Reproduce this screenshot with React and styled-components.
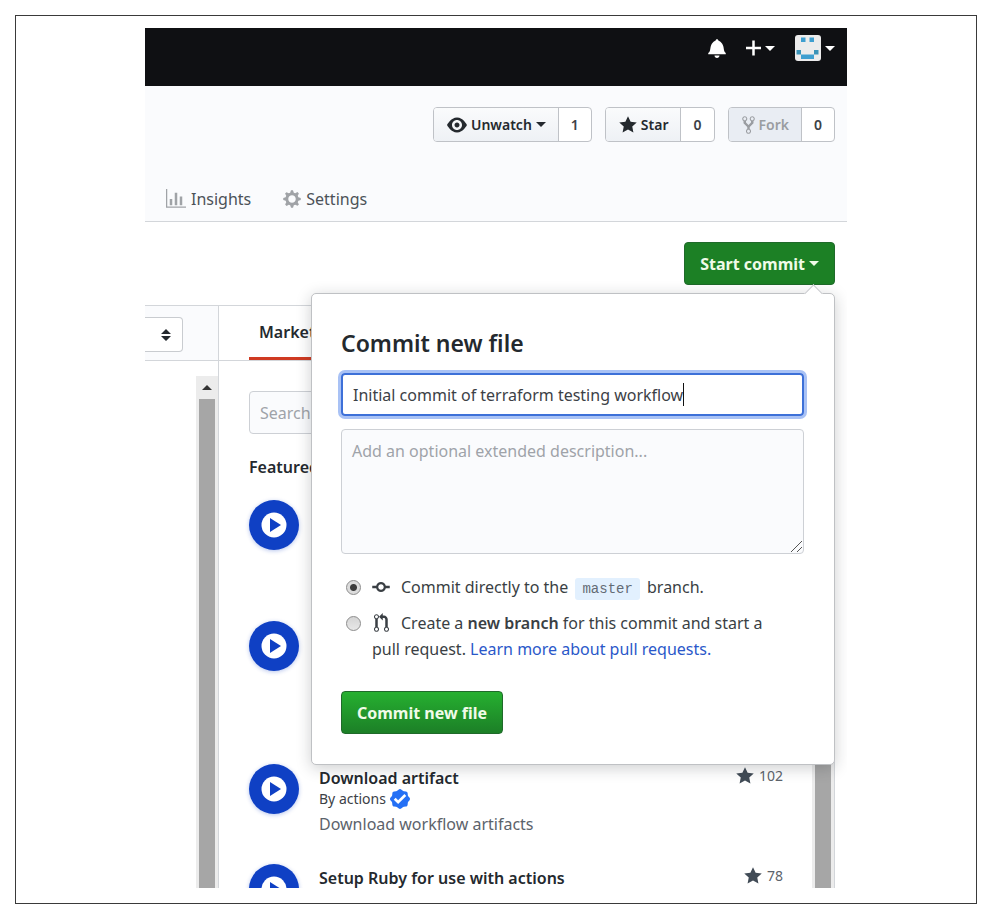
import React from "react";
import styled, { createGlobalStyle } from "styled-components";

const GlobalStyle = createGlobalStyle`
  *, *::before, *::after { box-sizing: border-box; }
  body {
    margin: 0;
    background: #fff;
    color: #24292e;
    font: 16px/26px "Noto Sans", "Open Sans", sans-serif;
  }
  button, input, textarea { font: inherit; color: inherit; }
  h2, h3, p { margin: 0; }
  svg { display: block; flex: none; }
`;

/* ---------- icons ---------- */

const ICONS = {
  eye: [16, "M8.06 2C3 2 0 8 0 8s3 6 8.06 6C13 14 16 8 16 8s-3-6-7.94-6zM8 12c-2.2 0-4-1.78-4-4 0-2.2 1.8-4 4-4 2.22 0 4 1.8 4 4 0 2.22-1.78 4-4 4zm2-4c0 1.11-.89 2-2 2-1.11 0-2-.89-2-2 0-1.11.89-2 2-2 1.11 0 2 .89 2 2z"],
  star: [14, "M14 6l-4.9-.64L7 1 4.9 5.36 0 6l3.6 3.26L2.67 14 7 11.67 11.33 14l-.93-4.74L14 6z"],
  fork: [10, "M8 1a1.993 1.993 0 0 0-1 3.72V6L5 8 3 6V4.72A1.993 1.993 0 0 0 2 1a1.993 1.993 0 0 0-1 3.72V6.5l3 3v1.78A1.993 1.993 0 0 0 5 15a1.993 1.993 0 0 0 1-3.72V9.5l3-3V4.72A1.993 1.993 0 0 0 8 1zM2 4.2C1.34 4.2.8 3.65.8 3c0-.65.55-1.2 1.2-1.2.65 0 1.2.55 1.2 1.2 0 .65-.55 1.2-1.2 1.2zm3 10c-.66 0-1.2-.55-1.2-1.2 0-.65.55-1.2 1.2-1.2.65 0 1.2.55 1.2 1.2 0 .65-.55 1.2-1.2 1.2zm3-10c-.66 0-1.2-.55-1.2-1.2 0-.65.55-1.2 1.2-1.2.65 0 1.2.55 1.2 1.2 0 .65-.55 1.2-1.2 1.2z"],
  graph: [16, "M16 14v1H0V0h1v14h15zM5 13H3V8h2v5zm4 0H7V3h2v10zm4 0h-2V6h2v7z"],
  gear: [14, "M14 8.77v-1.6l-1.94-.64-.45-1.09.88-1.84-1.13-1.13-1.81.91-1.09-.45-.69-1.92h-1.6l-.63 1.94-1.11.45-1.84-.88-1.13 1.13.91 1.81-.45 1.09L0 7.23v1.59l1.94.64.45 1.09-.88 1.84 1.13 1.13 1.81-.91 1.09.45.69 1.92h1.59l.63-1.94 1.11-.45 1.84.88 1.13-1.13-.92-1.81.47-1.09L14 8.75v.02zM7 11c-1.66 0-3-1.34-3-3s1.34-3 3-3 3 1.34 3 3-1.34 3-3 3z"],
  bell: [14, "M14 12v1H0v-1l.73-.58c.77-.77.81-2.55 1.19-4.42C2.69 3.23 6 2 6 2c0-.55.45-1 1-1s1 .45 1 1c0 0 3.39 1.23 4.16 5 .38 1.88.42 3.66 1.19 4.42l.66.58H14zm-7 4c1.11 0 2-.89 2-2H5c0 1.11.89 2 2 2z"],
  plus: [12, "M12 9H7v5H5V9H0V7h5V2h2v5h5v2z"],
  commit: [14, "M10.86 7c-.45-1.72-2-3-3.86-3-1.86 0-3.41 1.28-3.86 3H0v2h3.14c.45 1.72 2 3 3.86 3 1.86 0 3.41-1.28 3.86-3H14V7h-3.14zM7 10.2c-1.22 0-2.2-.98-2.2-2.2 0-1.22.98-2.2 2.2-2.2 1.22 0 2.2.98 2.2 2.2 0 1.22-.98 2.2-2.2 2.2z"],
  pull: [12, "M11 11.28V5c-.03-.78-.34-1.47-.94-2.06C9.46 2.35 8.78 2.03 8 2H7V0L4 3l3 3V4h1c.27.02.48.11.69.31.21.2.3.42.31.69v6.28A1.993 1.993 0 0 0 10 15a1.993 1.993 0 0 0 1-3.72zm-1 2.92c-.66 0-1.2-.55-1.2-1.2 0-.65.55-1.2 1.2-1.2.65 0 1.2.55 1.2 1.2 0 .65-.55 1.2-1.2 1.2zM4 3c0-1.11-.89-2-2-2a1.993 1.993 0 0 0-1 3.72v6.56A1.993 1.993 0 0 0 2 15a1.993 1.993 0 0 0 1-3.72V4.72c.59-.34 1-.98 1-1.72zm-.8 10c0 .66-.55 1.2-1.2 1.2-.65 0-1.2-.55-1.2-1.2 0-.65.55-1.2 1.2-1.2.65 0 1.2.55 1.2 1.2zM2 4.2C1.34 4.2.8 3.65.8 3c0-.65.55-1.2 1.2-1.2.65 0 1.2.55 1.2 1.2 0 .65-.55 1.2-1.2 1.2z"],
  verified: [16, "M15.67 7.06l-1.08-1.34c-.17-.22-.28-.48-.31-.77l-.19-1.7a1.51 1.51 0 0 0-1.33-1.33l-1.7-.19c-.3-.03-.56-.16-.78-.33L8.94.32c-.55-.44-1.33-.44-1.88 0L5.72 1.4c-.22.17-.48.28-.77.31l-1.7.19c-.7.08-1.25.63-1.33 1.33l-.19 1.7c-.03.3-.16.56-.33.78L.32 7.05c-.44.55-.44 1.33 0 1.88l1.08 1.34c.17.22.28.48.31.77l.19 1.7c.08.7.63 1.25 1.33 1.33l1.7.19c.3.03.56.16.78.33l1.34 1.08c.55.44 1.33.44 1.88 0l1.34-1.08c.22-.17.48-.28.77-.31l1.7-.19c.7-.08 1.25-.63 1.33-1.33l.19-1.7c.03-.3.16-.56.33-.78l1.08-1.34c.44-.55.44-1.33 0-1.88zM6.5 12L3 8.5 4.5 7l2 2 5-5L13 5.55 6.5 12z"],
};

function Icon({ name, size = 20, color = "currentColor" }) {
  const [width, d] = ICONS[name];
  return (
    <svg height={size} width={Math.round((size * width) / 16)} viewBox={`0 0 ${width} 16`} fill={color} aria-hidden="true">
      <path fillRule="evenodd" d={d} />
    </svg>
  );
}

function Avatar() {
  return (
    <svg width="26" height="26" viewBox="0 0 26 26" role="img" aria-label="Account">
      <rect width="26" height="26" rx="3" fill="#ececec" />
      <path fill="#3f9fd0" d="M6 2.500h4.500V7H6zM14.500 2.500H19V7h-4.500zM6 19.500h13V24H6z" />
      <path fill="#3a93b8" d="M1.500 15H6v4.500H1.500zM19 15h4.500v4.500H19z" />
    </svg>
  );
}

function PlayGlyph() {
  return (
    <svg width="26" height="26" viewBox="0 0 26 26" aria-hidden="true">
      <circle cx="13" cy="13" r="12.500" fill="#fff" />
      <path d="M9 6v14l11-7z" fill="#0f40c4" />
    </svg>
  );
}

function Grip() {
  return (
    <svg width="11" height="11" viewBox="0 0 11 11" fill="none" stroke="#555" aria-hidden="true">
      <path d="M0 11L11 0M6 11l5-5" />
    </svg>
  );
}

function SortGlyph() {
  return (
    <svg width="10" height="14" viewBox="0 0 10 14" fill="#24292e" aria-hidden="true">
      <path d="M0 6l5-5 5 5zM0 8h10l-5 5z" />
    </svg>
  );
}

/* ---------- page shell ---------- */

const Page = styled.div`
  height: 100vh;
  padding: 15px 8px 9px 15px;
`;

const Frame = styled.div`
  height: 100%;
  border: 1px solid #3a3a3a;
  padding: 12px 129px 15px;
`;

const Shot = styled.div`
  height: 100%;
  display: flex;
  flex-direction: column;
  overflow: hidden;
`;

const TopBar = styled.header`
  flex: none;
  height: 58px;
  padding: 6px 12px 0;
  display: flex;
  align-items: flex-start;
  justify-content: flex-end;
  gap: 20px;
  background: #0f1013;
  color: #fff;
`;

const BarButton = styled.button`
  display: flex;
  align-items: center;
  gap: 4px;
  height: 28px;
  padding: 0;
  border: 0;
  background: none;
`;

const Triangle = styled.span`
  border: solid transparent;
  border-width: 5px 5px 0;
  border-top-color: currentColor;
`;

const RepoHead = styled.section`
  flex: none;
  display: flex;
  flex-direction: column;
  justify-content: space-between;
  height: 136px;
  padding: 21px 12px 9px 21px;
  background: #fafbfd;
  border-bottom: 1px solid #d3d6da;
`;

const Actions = styled.div`
  display: flex;
  justify-content: flex-end;
  gap: 13px;
`;

const Social = styled.div`
  display: flex;
  height: 35px;
  border: 1px solid #bfc2c7;
  border-radius: 4px;
  overflow: hidden;
  background: #fff;
  font-size: 14px;
  font-weight: 600;
`;

const SocialButton = styled.button`
  display: flex;
  align-items: center;
  gap: 4px;
  padding: 0 12px 0 13px;
  border: 0;
  border-right: 1px solid #bfc2c7;
  background: linear-gradient(#fafbfc, #eef1f5);
  &:disabled {
    background: #e9edf3;
    color: #9a9da1;
  }
`;

const Count = styled.a`
  display: flex;
  align-items: center;
  padding: 0 12px;
  color: #3c4146;
  text-decoration: none;
`;

const Tabs = styled.nav`
  display: flex;
  gap: 32px;
`;

const TabLink = styled.a`
  display: flex;
  align-items: center;
  gap: 5px;
  color: #4c5258;
  text-decoration: none;
  svg { color: #a0a3a7; }
`;

const CommitBar = styled.div`
  flex: none;
  display: flex;
  justify-content: flex-end;
  padding: 20px 12px;
`;

const PopoverAnchor = styled.div`
  position: relative;
`;

const GreenButton = styled.button`
  display: flex;
  align-items: center;
  gap: 4px;
  height: 43px;
  padding: 0 15px;
  border: 1px solid #1f6a2a;
  border-radius: 4px;
  background: ${(p) => (p.$pressed ? "#1c8025" : "linear-gradient(#26b030, #1c7f27)")};
  color: #f0fbe8;
  font-weight: 700;
`;

/* ---------- commit popover ---------- */

const Popover = styled.form`
  position: absolute;
  z-index: 2;
  top: calc(100% + 8px);
  right: 0;
  width: 524px;
  padding: 34px 30px 30px 29px;
  display: flex;
  flex-direction: column;
  align-items: stretch;
  background: #fff;
  border: 1px solid #bfc1c4;
  border-radius: 5px;
  box-shadow: 0 3px 15px rgba(27, 31, 35, 0.22);
  &::before {
    content: "";
    position: absolute;
    top: -7px;
    right: 14px;
    width: 13px;
    height: 13px;
    background: #fff;
    border: solid #c9cbce;
    border-width: 1px 0 0 1px;
    transform: rotate(45deg);
  }
`;

const PopoverTitle = styled.h2`
  font-size: 23px;
  line-height: 30px;
  font-weight: 600;
`;

const SummaryField = styled.label`
  display: flex;
  align-items: center;
  height: 43px;
  margin-top: 15px;
  padding: 0 10px;
  border: 2px solid #3d70d8;
  border-radius: 4px;
  box-shadow: 0 0 0 3px #a9c2f5;
`;

const SummaryInput = styled.input`
  field-sizing: content;
  max-width: 100%;
  padding: 0;
  border: 0;
  outline: 0;
  background: none;
  color: #3c4146;
`;

const TextCursor = styled.span`
  width: 1px;
  height: 23px;
  background: #111;
`;

const DescriptionField = styled.div`
  position: relative;
  margin-top: 13px;
  svg {
    position: absolute;
    right: 2px;
    bottom: 2px;
  }
`;

const Description = styled.textarea`
  display: block;
  width: 100%;
  height: 125px;
  padding: 8px 10px;
  border: 1px solid #cdd0d5;
  border-radius: 4px;
  background: #fafbfd;
  resize: none;
  outline: 0;
  &::placeholder { color: #9fa3a9; opacity: 1; }
`;

const Choice = styled.div`
  display: flex;
  align-items: flex-start;
  gap: 11px;
  margin-top: ${(p) => (p.$first ? "20px" : "10px")};
  padding: 0 24px 0 5px;
  color: #3a3f44;
`;

const Radio = styled.input`
  appearance: none;
  flex: none;
  width: 15px;
  height: 15px;
  margin: 6px 0 0;
  border: 1px solid #8c8c8c;
  border-radius: 50%;
  background: ${(p) =>
    p.defaultChecked
      ? "radial-gradient(circle, #3c3c3c 0 3px, #dcdcdc 4px)"
      : "linear-gradient(#d4d4d4, #e8e8e8)"};
`;

const ChoiceText = styled.label`
  b { font-weight: 600; }
`;

const ChoiceIcon = styled.span`
  display: inline-flex;
  justify-content: center;
  width: 18px;
  margin-right: 11px;
  vertical-align: -4px;
`;

const HelpLink = styled.a`
  color: #2a58c9;
  text-decoration: none;
`;

const Branch = styled.code`
  margin: 0 3px;
  padding: 3px 7px;
  border-radius: 3px;
  background: #e2f0fe;
  color: #626b75;
  font: 14px "Liberation Mono", monospace;
`;

const SubmitRow = styled.div`
  display: flex;
  margin-top: 29px;
`;

/* ---------- editor ---------- */

const Editor = styled.main`
  flex: 1;
  min-height: 0;
  display: grid;
  grid-template-columns: 74px 1fr;
  margin-right: 12px;
  border-top: 1px solid #d3d6da;
`;

const Pane = styled.section`
  display: flex;
  flex-direction: column;
  min-height: 0;
  overflow: hidden;
  border-right: 1px solid #d3d6da;
`;

const PaneHead = styled.div`
  flex: none;
  height: 55px;
  display: flex;
  align-items: ${(p) => (p.$tabs ? "stretch" : "center")};
  padding-left: ${(p) => (p.$tabs ? "30px" : "0")};
  border-bottom: 1px solid #d3d6da;
  background: ${(p) => (p.$tabs ? "#fff" : "#fafbfd")};
`;

const ModeButton = styled.button`
  display: flex;
  align-items: center;
  justify-content: flex-end;
  width: 38px;
  height: 35px;
  padding: 0 11px;
  margin-top: 3px;
  border: 1px solid #c9ccd0;
  border-left: 0;
  border-radius: 0 4px 4px 0;
  background: #fff;
`;

const MarketTab = styled.button`
  padding: 0 10px;
  border: 0;
  border-bottom: 3px solid #cf3a22;
  background: none;
  font-weight: 600;
`;

const PaneBody = styled.div`
  flex: 1;
  min-height: 0;
  display: flex;
  justify-content: flex-end;
  padding-top: ${(p) => (p.$inset ? "15px" : "0")};
`;

const ScrollTrack = styled.div`
  flex: none;
  width: 22px;
  display: flex;
  flex-direction: column;
  align-items: stretch;
  padding: 0 3px;
  background: #ececec;
  &::after {
    content: "";
    flex: 1;
    background: #a6a6a6;
  }
`;

const ScrollUp = styled.button`
  display: flex;
  align-items: center;
  justify-content: center;
  height: 23px;
  padding: 0;
  border: 0;
  background: none;
  &::before {
    content: "";
    border: 5px solid transparent;
    border-top: 0;
    border-bottom-color: #333;
  }
`;

const Market = styled.div`
  flex: 1;
  min-width: 0;
  padding: 30px 29px 0 30px;
`;

const Search = styled.input`
  display: block;
  width: 100%;
  height: 43px;
  padding: 0 10px;
  border: 1px solid #cdd0d5;
  border-radius: 4px;
  background: #fafbfd;
  &::placeholder { color: #9fa3a9; opacity: 1; }
`;

const ListTitle = styled.h3`
  margin: 20px 0;
  font-size: 16px;
  line-height: 26px;
  font-weight: 600;
`;

const Entry = styled.article`
  display: grid;
  grid-template-columns: 50px 1fr auto;
  column-gap: 20px;
  align-items: start;
  min-height: ${(p) => p.$size}px;
`;

const Disc = styled.div`
  display: grid;
  place-items: center;
  width: 50px;
  height: 50px;
  border-radius: 50%;
  background: #0f40c4;
  box-shadow: 0 1px 4px rgba(15, 64, 196, 0.3);
`;

const EntryName = styled.h3`
  font-size: 16px;
  line-height: 28px;
  font-weight: 600;
`;

const Author = styled.p`
  display: flex;
  align-items: center;
  gap: 4px;
  height: 14px;
  font-size: 14px;
  line-height: 14px;
  color: #3c4146;
`;

const Summary = styled.p`
  margin-top: 5px;
  line-height: 26px;
  color: #5c636b;
`;

const Stars = styled.span`
  display: flex;
  align-items: center;
  gap: 5px;
  font-size: 14px;
  line-height: 24px;
  color: #5c636b;
  svg { color: #414b56; }
`;

const ENTRIES = [
  { size: 121 },
  { size: 143 },
  { size: 100, name: "Download artifact", author: "By actions", text: "Download workflow artifacts", stars: 102 },
  { size: 100, name: "Setup Ruby for use with actions", stars: 78 },
];

function MarketEntry({ entry }) {
  return (
    <Entry $size={entry.size}>
      <Disc><PlayGlyph /></Disc>
      <div>
        {entry.name && <EntryName>{entry.name}</EntryName>}
        {entry.author && <Author>{entry.author} <Icon name="verified" color="#2470f5" /></Author>}
        {entry.text && <Summary>{entry.text}</Summary>}
      </div>
      {entry.stars && <Stars><Icon name="star" />{entry.stars}</Stars>}
    </Entry>
  );
}

function CommitPopover() {
  return (
    <Popover onSubmit={(e) => e.preventDefault()}>
      <PopoverTitle>Commit new file</PopoverTitle>
      <SummaryField>
        <SummaryInput aria-label="Commit summary" defaultValue="Initial commit of terraform testing workflow" />
        <TextCursor />
      </SummaryField>
      <DescriptionField>
        <Description aria-label="Extended description" placeholder="Add an optional extended description..." />
        <Grip />
      </DescriptionField>
      <Choice $first>
        <Radio type="radio" name="target" id="target-direct" defaultChecked />
        <ChoiceText htmlFor="target-direct">
          <ChoiceIcon><Icon name="commit" /></ChoiceIcon>
          Commit directly to the <Branch>master</Branch> branch.
        </ChoiceText>
      </Choice>
      <Choice>
        <Radio type="radio" name="target" id="target-branch" />
        <ChoiceText htmlFor="target-branch">
          <ChoiceIcon><Icon name="pull" /></ChoiceIcon>
          Create a <b>new branch</b> for this commit and start a pull request.{" "}
          <HelpLink href="#pull-requests">Learn more about pull requests.</HelpLink>
        </ChoiceText>
      </Choice>
      <SubmitRow>
        <GreenButton type="submit">Commit new file</GreenButton>
      </SubmitRow>
    </Popover>
  );
}

export default function App() {
  return (
    <Page>
      <GlobalStyle />
      <Frame>
        <Shot>
          <TopBar>
            <BarButton aria-label="Notifications"><Icon name="bell" /></BarButton>
            <BarButton aria-label="Create new"><Icon name="plus" /><Triangle /></BarButton>
            <BarButton aria-label="Account menu"><Avatar /><Triangle /></BarButton>
          </TopBar>
          <RepoHead>
            <Actions>
              <Social>
                <SocialButton><Icon name="eye" />Unwatch<Triangle /></SocialButton>
                <Count href="#watchers">1</Count>
              </Social>
              <Social>
                <SocialButton><Icon name="star" />Star</SocialButton>
                <Count href="#stars">0</Count>
              </Social>
              <Social>
                <SocialButton disabled><Icon name="fork" />Fork</SocialButton>
                <Count href="#forks">0</Count>
              </Social>
            </Actions>
            <Tabs>
              <TabLink href="#insights"><Icon name="graph" />Insights</TabLink>
              <TabLink href="#settings"><Icon name="gear" />Settings</TabLink>
            </Tabs>
          </RepoHead>
          <CommitBar>
            <PopoverAnchor>
              <GreenButton $pressed>Start commit<Triangle /></GreenButton>
              <CommitPopover />
            </PopoverAnchor>
          </CommitBar>
          <Editor>
            <Pane>
              <PaneHead>
                <ModeButton aria-label="Editor mode"><SortGlyph /></ModeButton>
              </PaneHead>
              <PaneBody $inset>
                <ScrollTrack><ScrollUp aria-label="Scroll up" /></ScrollTrack>
              </PaneBody>
            </Pane>
            <Pane>
              <PaneHead $tabs>
                <MarketTab>Marketplace</MarketTab>
              </PaneHead>
              <PaneBody>
                <Market>
                  <Search type="search" aria-label="Search" placeholder="Search" />
                  <ListTitle>Featured</ListTitle>
                  {ENTRIES.map((entry, i) => <MarketEntry key={i} entry={entry} />)}
                </Market>
                <ScrollTrack />
              </PaneBody>
            </Pane>
          </Editor>
        </Shot>
      </Frame>
    </Page>
  );
}
